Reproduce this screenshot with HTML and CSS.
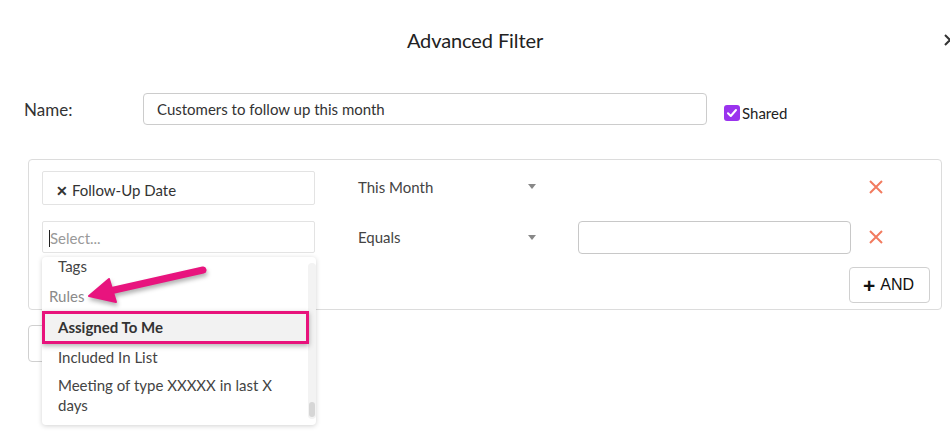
FILE: index.html
```html
<!DOCTYPE html>
<html>
<head>
<meta charset="utf-8">
<link rel="stylesheet" href="styles.css">
</head>
<body>
<div class="page">
  <header class="header">
    <div></div>
    <h1 class="title">Advanced Filter</h1>
    <button class="close" aria-label="Close">
      <svg width="14" height="14" viewBox="0 0 14 14"><path d="M2 2L12 12M12 2L2 12" stroke="#333" stroke-width="2" fill="none"/></svg>
    </button>
  </header>

  <div class="name-row">
    <label class="name-label">Name:</label>
    <div class="name-input">Customers to follow up this month</div>
    <div class="shared">
      <span class="checkbox"><svg width="12" height="12" viewBox="0 0 12 12"><path d="M2 6.3L4.8 9L10 3" stroke="#fff" stroke-width="2" fill="none" stroke-linecap="round" stroke-linejoin="round"/></svg></span>
      <span>Shared</span>
    </div>
  </div>

  <div class="panel">
    <div class="rule-row first">
      <div class="field chosen"><span class="tag-x">✕</span>Follow-Up Date</div>
      <div class="op"><span>This Month</span><span class="caret"></span></div>
      <div class="value-spacer"></div>
      <span class="remove"><svg width="16" height="16" viewBox="0 0 16 16"><path d="M2 2L14 14M14 2L2 14" stroke="#f27b5f" stroke-width="2" fill="none"/></svg></span>
    </div>
    <div class="rule-row second">
      <div class="field select-wrap">
        <span class="cursor"></span><span class="placeholder">Select...</span>
        <div class="dropdown">
          <ul class="menu">
            <li class="item">Tags</li>
            <li class="group">Rules</li>
            <li class="item active">Assigned To Me</li>
            <li class="item plain">Included In List</li>
            <li class="item multi">Meeting of type XXXXX in last X days</li>
          </ul>
          <div class="scrollbar"><div class="thumb"></div></div>
        </div>
      </div>
      <div class="op"><span>Equals</span><span class="caret"></span></div>
      <div class="value-input"></div>
      <span class="remove"><svg width="16" height="16" viewBox="0 0 16 16"><path d="M2 2L14 14M14 2L2 14" stroke="#f27b5f" stroke-width="2" fill="none"/></svg></span>
    </div>
    <div class="and-row">
      <button class="and-btn"><b class="plus">+</b> AND</button>
    </div>
  </div>

  <div class="below">
    <button class="or-btn" aria-label="Add OR group"></button>
  </div>

  <svg class="pointer" width="140" height="50" viewBox="80 258 140 50">
    <path d="M203 270L112 290.5" stroke="#e8147e" stroke-width="7" stroke-linecap="round" fill="none"/>
    <path d="M89 296L109 279L116 302Z" fill="#e8147e" stroke="#e8147e" stroke-width="2" stroke-linejoin="round"/>
  </svg>
</div>
</body>
</html>
```

FILE: styles.css
```css
* { box-sizing: border-box; }
html, body { margin: 0; padding: 0; }
body {
  width: 950px;
  height: 443px;
  overflow: hidden;
  background: #fff;
  font-family: "Lato", "Liberation Sans", sans-serif;
  color: #333;
  font-size: 15px;
}
.page { position: relative; width: 950px; height: 443px; }

.header {
  height: 79px;
  display: grid;
  grid-template-columns: 1fr auto 1fr;
  align-items: center;
}
.title {
  margin: 0;
  font-size: 20px;
  font-weight: 400;
  color: #222;
  letter-spacing: -0.1px;
}
.close {
  justify-self: end;
  margin-right: -7px;
  margin-top: 1px;
  background: none;
  border: 0;
  padding: 0;
  display: flex;
}

.name-row {
  display: flex;
  align-items: center;
  padding-top: 14px;
  padding-left: 24px;
}
.name-label {
  width: 119px;
  font-size: 17px;
  color: #333;
}
.name-input {
  width: 564px;
  height: 32px;
  border: 1px solid #ccc;
  border-radius: 4px;
  padding-left: 13px;
  padding-bottom: 1px;
  display: flex;
  align-items: center;
  color: #333;
}
.shared {
  margin-left: 17px;
  margin-top: 7px;
  display: flex;
  align-items: center;
  color: #222;
}
.checkbox {
  width: 16px;
  height: 16px;
  border-radius: 3px;
  background: #9a33ee;
  display: flex;
  align-items: center;
  justify-content: center;
  margin-right: 2px;
}

.panel {
  margin-top: 34px;
  margin-left: 28px;
  width: 914px;
  border: 1px solid #dcdcdc;
  border-radius: 4px;
  padding: 11px 11px 6px 13px;
}
.rule-row {
  display: flex;
  align-items: center;
}
.rule-row.first { height: 34px; }
.rule-row.first .op, .rule-row.first .remove { margin-top: -3px; }
.rule-row.second { height: 32px; margin-top: 16px; }
.field {
  width: 273px;
  height: 100%;
  border: 1px solid #e3e3e3;
  border-radius: 2px;
  display: flex;
  align-items: center;
  padding-left: 13px;
}
.field.chosen { padding-top: 4px; }
.tag-x {
  font-size: 14px;
  font-weight: 700;
  margin-right: 4px;
  color: #333;
}
.select-wrap { position: relative; padding-left: 6px; padding-top: 2px; }
.cursor {
  width: 1px;
  height: 17px;
  background: #222;
}
.placeholder { color: #999; }
.op {
  margin-left: 43px;
  width: 182px;
  display: flex;
  align-items: center;
  justify-content: space-between;
  padding-right: 4px;
  color: #444;
}
.caret {
  width: 0;
  height: 0;
  border-left: 4px solid transparent;
  border-right: 4px solid transparent;
  border-top: 5px solid #888;
}
.value-spacer { margin-left: 38px; width: 273px; }
.value-input {
  margin-left: 38px;
  width: 273px;
  height: 33px;
  border: 1px solid #c8c8c8;
  border-radius: 4px;
}
.remove { margin-left: 17px; display: flex; }

.and-row {
  display: flex;
  justify-content: flex-end;
  margin-top: 14px;
}
.and-btn {
  width: 81px;
  height: 36px;
  border: 1px solid #d0d0d0;
  border-radius: 4px;
  background: #fff;
  font-family: "Liberation Sans", "Lato", sans-serif;
  font-size: 16px;
  color: #111;
  display: flex;
  align-items: center;
  justify-content: center;
  gap: 5px;
  padding-left: 4px;
}
.plus { font-size: 21px; line-height: 1; font-weight: 900; }

.below { padding: 15px 0 0 28px; }
.or-btn {
  width: 80px;
  height: 37px;
  border: 1px solid #d0d0d0;
  border-radius: 4px;
  background: #fff;
}

.dropdown {
  position: absolute;
  top: 35px;
  left: -1px;
  width: 274px;
  height: 168px;
  background: #fff;
  border-radius: 4px;
  box-shadow: 0 1px 5px rgba(0,0,0,0.18);
  overflow: hidden;
  z-index: 5;
}
.menu {
  list-style: none;
  margin: -6px 0 0 0;
  padding: 0;
}
.menu li {
  color: #444;
  font-size: 15px;
}
.item {
  height: 30px;
  line-height: 30px;
  padding-left: 16px;
}
.group {
  height: 30px;
  line-height: 30px;
  padding-left: 7px;
  color: #8a8a8a !important;
}
.item.active {
  position: relative;
  z-index: 2;
  width: 267px;
  height: 33px;
  line-height: 20px;
  padding: 3px 0 0 13px;
  border: 3px solid #e8137c;
  background: #f2f2f2;
  font-weight: 700;
  color: #333 !important;
  box-shadow: 0 2px 5px rgba(0,0,0,0.3);
}
.item.plain { height: 28px; line-height: 20px; padding-top: 3px; }
.item.multi {
  height: auto;
  line-height: 20px;
  padding-top: 3px;
  padding-right: 30px;
}
.scrollbar {
  position: absolute;
  right: 0;
  top: 6px;
  bottom: 6px;
  width: 8px;
  background: #f3f3f3;
  border-radius: 4px;
}
.thumb {
  position: absolute;
  left: 1px;
  right: 1px;
  bottom: 2px;
  height: 15px;
  background: #d6d6d6;
  border-radius: 3px;
}

.pointer {
  position: absolute;
  left: 80px;
  top: 258px;
  z-index: 10;
  overflow: visible;
  filter: drop-shadow(1px 3px 2px rgba(0,0,0,0.3));
}
```
